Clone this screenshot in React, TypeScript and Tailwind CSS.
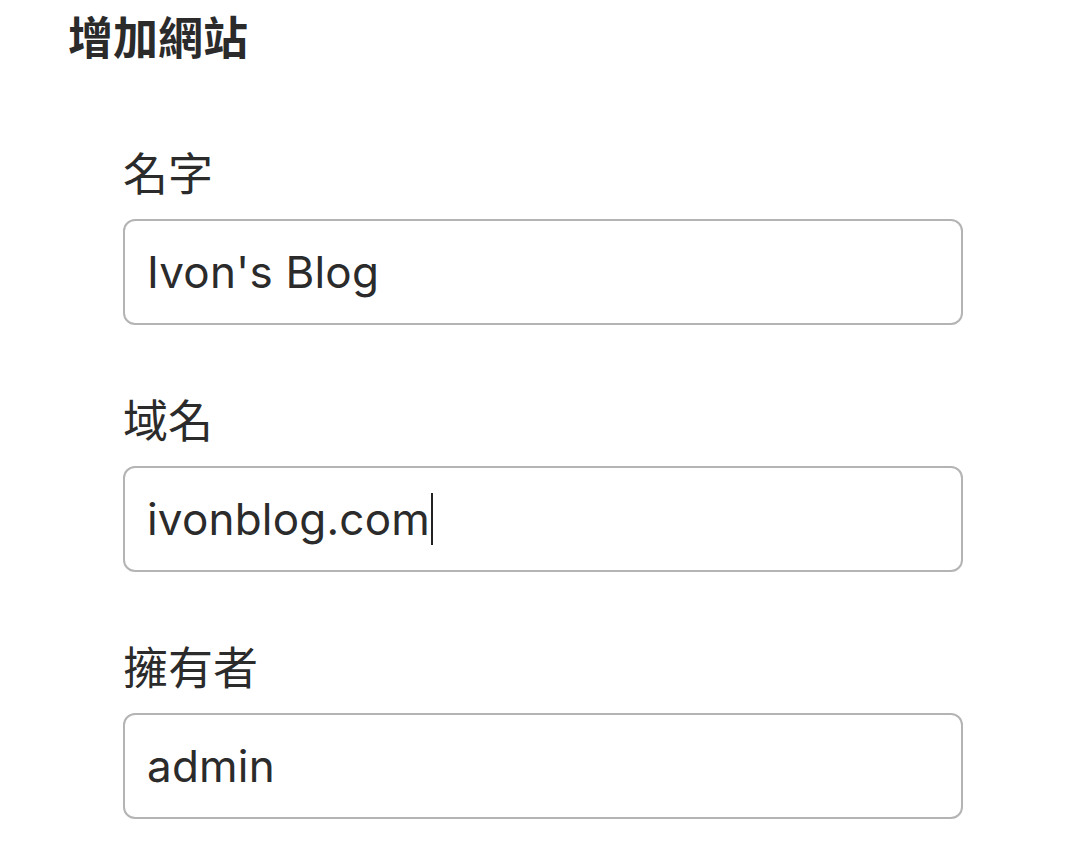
const font = { fontFamily: '"Inter", "Noto Sans CJK TC", sans-serif' };

function Field({ label, value, caret }: { label: string; value: string; caret?: boolean }) {
  return (
    <div className="flex flex-col">
      <label className="text-[45px] leading-[66px] text-[#2b2b2b]">{label}</label>
      <div className="mt-[11px] flex h-[106px] items-center rounded-[12px] border-2 border-[#b4b4b4] bg-white pl-[22px] text-[44px] tracking-[0.2px] text-[#2b2b2b]">
        <span>{value}</span>
        {caret && <span className="ml-[1px] inline-block h-[52px] w-[2px] bg-[#222]" />}
      </div>
    </div>
  );
}

export default function App() {
  return (
    <div className="min-h-screen bg-white pl-[68px] pt-[6px]" style={font}>
      <h1 className="text-[45px] font-bold leading-[66px] text-[#2b2b2b]">增加網站</h1>
      <div className="ml-[55px] mt-[70px] flex w-[840px] flex-col gap-[64px]">
        <Field label="名字" value="Ivon's Blog" />
        <Field label="域名" value="ivonblog.com" caret />
        <Field label="擁有者" value="admin" />
      </div>
    </div>
  );
}
